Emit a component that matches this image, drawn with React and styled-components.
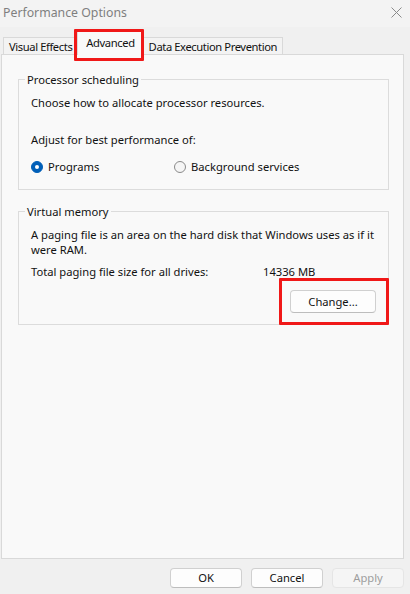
import React from "react";
import styled, { createGlobalStyle } from "styled-components";

const Global = createGlobalStyle`
  html, body {
    margin: 0;
    padding: 0;
    background: #f0f0f0;
  }
  body {
    font-family: "Noto Sans", "Segoe UI", sans-serif;
    font-size: 11.2px;
    color: #111111;
  }
`;

const Window = styled.div`
  width: 410px;
  height: 594px;
  display: flex;
  flex-direction: column;
  background: #f0f0f0;
  overflow: hidden;
`;

const TitleBar = styled.div`
  height: 27px;
  display: flex;
  align-items: center;
  justify-content: space-between;
  padding: 0 8px 3px 3px;
  box-sizing: border-box;
  background: #f3f3f3;
  color: #7f7f7f;
  font-size: 12.3px;
`;

const CloseBtn = styled.div`
  width: 12px;
  height: 12px;
  display: flex;
  align-items: center;
  justify-content: center;
`;

const TabRow = styled.div`
  display: flex;
  align-items: flex-end;
  height: 27px;
  padding-left: 3px;
  box-sizing: border-box;
`;

const Tab = styled.div`
  position: relative;
  height: ${(p) => (p.$active ? "24px" : "17px")};
  margin: 0 ${(p) => (p.$active ? "-1px" : "0")} ${(p) => (p.$active ? "-1px" : "0")};
  padding: 0 ${(p) => (p.$active ? "8px" : "5px")};
  padding-bottom: ${(p) => (p.$active ? "2px" : "0")};
  box-sizing: border-box;
  display: flex;
  align-items: center;
  border: 1px solid #d9d9d9;
  border-bottom: none;
  background: ${(p) => (p.$active ? "#f9f9f9" : "#f3f3f3")};
  z-index: ${(p) => (p.$active ? 2 : 1)};
  white-space: nowrap;
  letter-spacing: -0.4px;
`;

const Highlight = styled.div`
  position: absolute;
  border: 3px solid #f01818;
  border-radius: 1px;
  pointer-events: none;
  top: ${(p) => p.$t}px;
  left: ${(p) => p.$l}px;
  right: ${(p) => p.$r}px;
  bottom: ${(p) => p.$b}px;
  z-index: 5;
`;

const Panel = styled.div`
  flex: 1;
  margin: 0 6px 0 1px;
  padding: 17px 14px 0 16px;
  border: 1px solid #d9d9d9;
  background: #f9f9f9;
  display: flex;
  flex-direction: column;
  gap: 14px;
`;

const Group = styled.fieldset`
  margin: 0;
  padding: 8px 10px ${(p) => p.$pb || 15}px 12px;
  border: 1px solid #dcdcdc;
  min-width: 0;
`;

const Legend = styled.legend`
  margin-left: -6px;
  padding: 0 2px;
  line-height: 15px;
`;

const Line = styled.div`
  line-height: 15px;
  margin-top: ${(p) => p.$mt || 0}px;
`;

const RadioRow = styled.div`
  display: grid;
  grid-template-columns: 143px auto;
  margin-top: 12px;
  line-height: 15px;
`;

const RadioOption = styled.label`
  display: flex;
  align-items: center;
  gap: 5px;
`;

const RadioDot = styled.span`
  width: 12px;
  height: 12px;
  box-sizing: border-box;
  border-radius: 50%;
  display: flex;
  align-items: center;
  justify-content: center;
  background: ${(p) => (p.$checked ? "#005fb8" : "#f5f5f5")};
  border: 1px solid ${(p) => (p.$checked ? "#005fb8" : "#8a8a8a")};
  &::after {
    content: "";
    display: ${(p) => (p.$checked ? "block" : "none")};
    width: 4px;
    height: 4px;
    border-radius: 50%;
    background: #ffffff;
  }
`;

const InfoRow = styled.div`
  display: grid;
  grid-template-columns: 232px auto;
  line-height: 15px;
  margin-top: 7px;
`;

const ButtonRow = styled.div`
  display: flex;
  justify-content: flex-end;
  margin-top: 11px;
  padding-right: 2px;
`;

const Button = styled.button`
  position: relative;
  font-family: inherit;
  font-size: 11.2px;
  color: ${(p) => (p.$disabled ? "#9d9d9d" : "#111111")};
  background: ${(p) => (p.$disabled ? "#f5f5f5" : "#fdfdfd")};
  border: 1px solid ${(p) => (p.$disabled ? "#e5e5e5" : "#d0d0d0")};
  border-bottom-color: ${(p) => (p.$disabled ? "#e5e5e5" : "#bdbdbd")};
  border-radius: 4px;
  width: ${(p) => p.$w || 72}px;
  height: ${(p) => p.$h || 20}px;
  padding: 0;
  line-height: 1;
`;

const Footer = styled.div`
  height: 35px;
  display: flex;
  justify-content: flex-end;
  align-items: flex-start;
  gap: 9px;
  padding: 9px 6px 0 0;
  box-sizing: border-box;
`;

export default function App() {
  return (
    <Window>
      <Global />
      <TitleBar>
        <span>Performance Options</span>
        <CloseBtn>
          <svg width="11" height="11" viewBox="0 0 11 11">
            <path d="M0.5 0.5 L10.5 10.5 M10.5 0.5 L0.5 10.5" stroke="#8a8a8a" strokeWidth="1" fill="none" />
          </svg>
        </CloseBtn>
      </TitleBar>

      <TabRow>
        <Tab>Visual Effects</Tab>
        <Tab $active>
          Advanced
          <Highlight $t={-3} $l={-4} $r={-1} $b={-6} />
        </Tab>
        <Tab>Data Execution Prevention</Tab>
      </TabRow>

      <Panel>
        <Group>
          <Legend>Processor scheduling</Legend>
          <Line>Choose how to allocate processor resources.</Line>
          <Line $mt={22}>Adjust for best performance of:</Line>
          <RadioRow>
            <RadioOption>
              <RadioDot $checked />
              Programs
            </RadioOption>
            <RadioOption>
              <RadioDot />
              Background services
            </RadioOption>
          </RadioRow>
        </Group>

        <Group $pb={11}>
          <Legend>Virtual memory</Legend>
          <Line>
            A paging file is an area on the hard disk that Windows uses as if it
            were RAM.
          </Line>
          <InfoRow>
            <span>Total paging file size for all drives:</span>
            <span>14336 MB</span>
          </InfoRow>
          <ButtonRow>
            <Button $w={86} $h={23}>
              Change...
              <Highlight $t={-13} $l={-12} $r={-14} $b={-13} />
            </Button>
          </ButtonRow>
        </Group>
      </Panel>

      <Footer>
        <Button>OK</Button>
        <Button>Cancel</Button>
        <Button $disabled>Apply</Button>
      </Footer>
    </Window>
  );
}
